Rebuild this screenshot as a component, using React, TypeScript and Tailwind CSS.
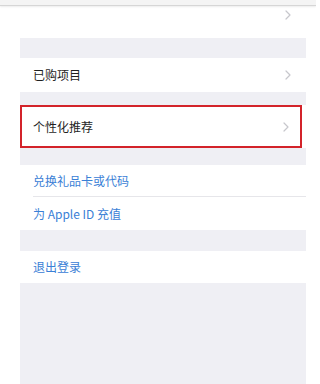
function Chevron() {
  return (
    <svg width="6" height="10" viewBox="0 0 6 10" className="shrink-0">
      <path d="M1 1l4 4-4 4" fill="none" stroke="#c7c7cc" strokeWidth="1.2" strokeLinecap="round" strokeLinejoin="round" />
    </svg>
  );
}

function Row({ label, blue, chevron }: { label: string; blue?: boolean; chevron?: boolean }) {
  return (
    <div className="h-full flex items-center justify-between pl-[13px] pr-[15px]">
      <span className={blue ? "text-[12px] text-[#3a80d6]" : "text-[12px] text-[#1f1f1f]"}>{label}</span>
      {chevron && <Chevron />}
    </div>
  );
}

export default function App() {
  return (
    <div
      className="w-[316px] h-[384px] bg-white flex flex-col overflow-hidden"
      style={{ fontFamily: '"Noto Sans CJK SC", "Noto Sans", sans-serif' }}
    >
      {/* top bar */}
      <div className="h-[6px] shrink-0 bg-[#f4f4f4] border-b border-[#d6d6d6] shadow-[0_1px_2px_rgba(0,0,0,0.08)]" />

      <div className="ml-5 mr-[10px] flex-1 flex flex-col">
        <div className="h-[32px] flex justify-end items-start pt-[4px] pr-[15px]">
          <Chevron />
        </div>
        <div className="h-[20px] bg-[#efeff4]" />
        <div className="h-[34px]">
          <Row label="已购项目" chevron />
        </div>
        <div className="h-[13px] bg-[#efeff4]" />
        <div className="h-[43px] border-2 border-[#d3232a] mr-[4px]">
          <div className="h-full flex items-center justify-between pl-[11px] pr-[11px]">
            <span className="text-[12px] text-[#1f1f1f]">个性化推荐</span>
            <Chevron />
          </div>
        </div>
        <div className="h-[17px] bg-[#efeff4]" />
        <div className="h-[32px] ml-[13px] border-b border-[#e6e6ea]">
          <div className="h-full flex items-center">
            <span className="text-[12px] text-[#3a80d6]">兑换礼品卡或代码</span>
          </div>
        </div>
        <div className="h-[33px]">
          <Row label="为 Apple ID 充值" blue />
        </div>
        <div className="h-[21px] bg-[#efeff4]" />
        <div className="h-[32px]">
          <Row label="退出登录" blue />
        </div>
        <div className="flex-1 bg-[#efeff4]" />
      </div>
    </div>
  );
}
